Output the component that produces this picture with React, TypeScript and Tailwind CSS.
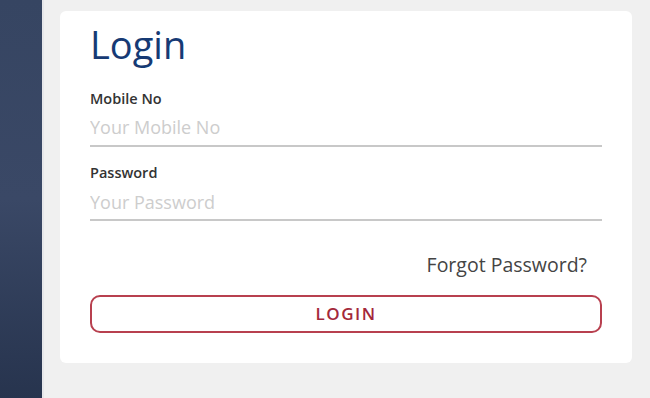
export default function App() {
  return (
    <div className="flex h-[398px] w-[650px] overflow-hidden bg-[#f0f0f0] font-['Open_Sans',sans-serif]">
      <div className="w-[44px] shrink-0 border-r-2 border-[#e6e7ea] bg-gradient-to-b from-[#364562] via-[#3a4866] to-[#27344e]"></div>
      <div className="flex-1 pl-[16px] pt-[11px]">
        <div className="w-[572px] rounded-md bg-white px-[30px] pb-[30px] pt-[11px]">
          <h1 className="text-[38px] leading-[44px] text-[#163a74]">Login</h1>

          <div className="mt-[24px]">
            <label className="block text-[14.5px] font-semibold leading-[18px] text-[#333]">Mobile No</label>
            <div className="mt-[6px] border-b-2 border-[#c8c8c8] pb-[5px]">
              <input
                className="h-[26px] w-full text-[18px] text-[#333] outline-none placeholder:text-[#cdcdcd]"
                placeholder="Your Mobile No"
              />
            </div>
          </div>

          <div className="mt-[17px]">
            <label className="block text-[14.5px] font-semibold leading-[18px] text-[#333]">Password</label>
            <div className="mt-[7px] border-b-2 border-[#c8c8c8] pb-[4px]">
              <input
                type="password"
                className="h-[26px] w-full text-[18px] text-[#333] outline-none placeholder:text-[#cdcdcd]"
                placeholder="Your Password"
              />
            </div>
          </div>

          <div className="mt-[32px] flex justify-end pr-[15px]">
            <a className="text-[19.5px] leading-[24px] text-[#444]">Forgot Password?</a>
          </div>

          <button className="mt-[18px] flex h-[38px] w-full items-center justify-center rounded-[10px] border-2 border-[#b8404f] text-[17px] font-semibold tracking-[1.5px] text-[#a4283a]">
            LOGIN
          </button>
        </div>
      </div>
    </div>
  )
}
